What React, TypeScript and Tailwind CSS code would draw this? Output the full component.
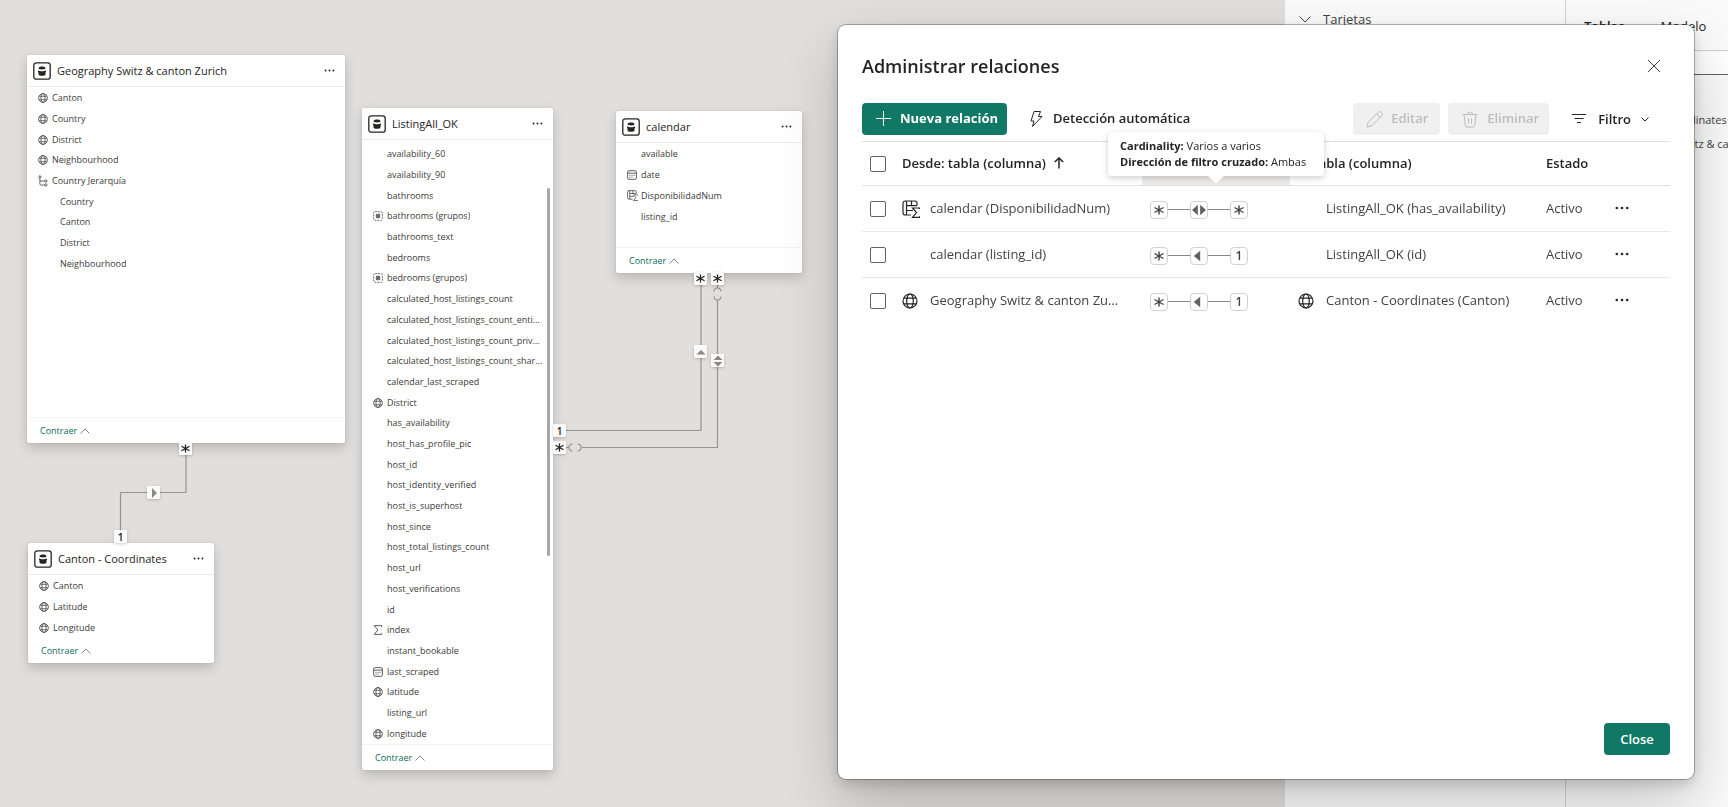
import React, { useState } from "react";

type IconName = "globe" | "hierarchy" | "group" | "date" | "calc" | "sigma";
type Field = { name: string; icon?: IconName; nested?: boolean };

const GlobeIcon = ({ className }: { className: string }) => (
  <svg viewBox="0 0 16 16" className={className} fill="none" stroke="currentColor" strokeWidth="1.2" aria-hidden="true">
    <circle cx="8" cy="8" r="7" />
    <ellipse cx="8" cy="8" rx="3.3" ry="7" />
    <path d="M2 5.2h12M2 10.8h12" />
  </svg>
);

const CalcIcon = ({ className }: { className: string }) => (
  <svg viewBox="0 0 18 18" className={className} fill="none" stroke="currentColor" strokeWidth="1.2" aria-hidden="true">
    <path d="M15 5.5V3.2A2.2 2.2 0 0 0 12.8 1H3.2A2.2 2.2 0 0 0 1 3.2v9.600A2.2 2.2 0 0 0 3.2 15H9M4.500 1v14M9.500 1v4.500M4.500 5.700H15M4.500 10.500H11" />
    <path d="M17.500 9V8H10.500L14.500 12.600 10.500 17.300h7v-1" />
  </svg>
);

const FieldIcon = ({ name }: { name: IconName }) => {
  if (name === "globe") return <GlobeIcon className="size-[10px]" />;
  if (name === "calc") return <CalcIcon className="size-[11px]" />;
  if (name === "sigma")
    return (
      <svg viewBox="0 0 16 16" className="size-[10px]" fill="none" stroke="currentColor" strokeWidth="1.3" aria-hidden="true">
        <path d="M14 3V1H1.800l6 7-6 7H14v-2" />
      </svg>
    );
  if (name === "date")
    return (
      <svg viewBox="0 0 16 16" className="size-[10px]" fill="none" stroke="currentColor" strokeWidth="1.3" aria-hidden="true">
        <rect x="1" y="1" width="14" height="14" rx="2.500" />
        <path d="M1 5h14" />
        <path d="M7.300 8.500h1.500M10.600 8.500h1.500M4 8.500h1.500M4 11.500h1.500M7.300 11.500h1.500" strokeWidth="1.500" />
      </svg>
    );
  if (name === "group")
    return (
      <svg viewBox="0 0 16 16" className="size-[10px]" fill="none" stroke="currentColor" strokeWidth="1.2" aria-hidden="true">
        <rect x="1" y="1" width="14" height="14" rx="2.500" strokeDasharray="3 1.600" />
        <rect x="4.500" y="4.500" width="7" height="7" rx="2" fill="currentColor" fillOpacity="0.75" stroke="none" />
      </svg>
    );
  return (
    <svg viewBox="0 0 16 18" className="h-3 w-[10px]" fill="none" stroke="currentColor" strokeWidth="1.2" aria-hidden="true">
      <circle cx="3" cy="2.500" r="1.800" />
      <path d="M3 4.300V13.500a2 2 0 0 0 2 2h5.500M3 9h7.500" />
      <circle cx="12.500" cy="9" r="1.900" />
      <circle cx="12.500" cy="15.300" r="1.900" />
    </svg>
  );
};

const TableIcon = () => (
  <svg viewBox="0 0 18 18" className="size-[18px] shrink-0" aria-hidden="true">
    <rect x="0.800" y="0.800" width="16.400" height="16.400" rx="2.500" fill="#fff" stroke="#252423" strokeWidth="1.300" />
    <path d="M5.500 6.200c0-2.400 7-2.400 7 0 0 1.600-7 1.600-7 0z" fill="#252423" />
    <path d="M5 8.200c2 1.400 6 1.400 8 0v1.500l-0.500 0.700v1.800c0 2-7 2-7 0v-1.800L5 9.700z" fill="#252423" />
  </svg>
);

const MoreIcon = ({ className }: { className: string }) => (
  <svg viewBox="0 0 14 4" className={className} fill="currentColor" aria-hidden="true">
    <circle cx="1.800" cy="2" r="1.300" />
    <circle cx="7" cy="2" r="1.300" />
    <circle cx="12.200" cy="2" r="1.300" />
  </svg>
);

const Asterisk = ({ className }: { className: string }) => (
  <svg viewBox="0 0 10 10" className={className} fill="none" stroke="currentColor" strokeWidth="1.400" aria-hidden="true">
    <path d="M5 0.500v9M0.500 2.500l9 5M9.500 2.500l-9 5" />
  </svg>
);

function TableCard({
  title,
  fields,
  card,
  list,
  footer = "h-[26px] border-t border-[#f3f2f1]",
  children,
}: {
  title: string;
  fields: Field[];
  card: string;
  list: string;
  footer?: string;
  children?: React.ReactNode;
}) {
  return (
    <section className={`absolute flex flex-col rounded-xs bg-white shadow-[0_5px_12px_rgba(0,0,0,0.18),0_0_2px_rgba(0,0,0,0.12)] ${card}`}>
      <header className="flex h-8 shrink-0 items-center border-b border-[#edebe9] px-[6px]">
        <TableIcon />
        <h2 className="ml-[6px] flex-1 truncate text-[11px] leading-4 text-[#252423]">{title}</h2>
        <button aria-label={`Más opciones de ${title}`} className="mr-1 flex h-4 items-center text-[#252423]">
          <MoreIcon className="h-[3px] w-[11px]" />
        </button>
      </header>
      <div className="relative flex min-h-0 flex-1 flex-col">
        <ul className={`grid auto-rows-fr ${list}`}>
          {fields.map((f, i) => (
            <li key={i} className={`flex min-w-0 items-center text-[#3b3a39] ${f.nested ? "pl-[33px]" : "pl-[11px]"}`}>
              {!f.nested && <span className="flex w-[14px] shrink-0 items-center">{f.icon && <FieldIcon name={f.icon} />}</span>}
              <span className="truncate text-[9px] leading-3">{f.name}</span>
            </li>
          ))}
        </ul>
        {children}
      </div>
      <footer className={`flex shrink-0 items-center pl-[13px] ${footer}`}>
        <button className="flex items-center gap-[3px] text-[9px] leading-3 text-[#0b6a5b]">
          Contraer
          <svg viewBox="0 0 10 6" className="h-[6px] w-[10px]" fill="none" stroke="#8a8886" aria-hidden="true">
            <path d="M0.500 5.500L5 1l4.500 4.500" />
          </svg>
        </button>
      </footer>
    </section>
  );
}

const geography: Field[] = [
  { name: "Canton", icon: "globe" },
  { name: "Country", icon: "globe" },
  { name: "District", icon: "globe" },
  { name: "Neighbourhood", icon: "globe" },
  { name: "Country Jerarquía", icon: "hierarchy" },
  { name: "Country", nested: true },
  { name: "Canton", nested: true },
  { name: "District", nested: true },
  { name: "Neighbourhood", nested: true },
];

const coordinates: Field[] = [
  { name: "Canton", icon: "globe" },
  { name: "Latitude", icon: "globe" },
  { name: "Longitude", icon: "globe" },
];

const calendar: Field[] = [
  { name: "available" },
  { name: "date", icon: "date" },
  { name: "DisponibilidadNum", icon: "calc" },
  { name: "listing_id" },
];

const listing: Field[] = [
  { name: "availability_60" },
  { name: "availability_90" },
  { name: "bathrooms" },
  { name: "bathrooms (grupos)", icon: "group" },
  { name: "bathrooms_text" },
  { name: "bedrooms" },
  { name: "bedrooms (grupos)", icon: "group" },
  { name: "calculated_host_listings_count" },
  { name: "calculated_host_listings_count_entire_homes" },
  { name: "calculated_host_listings_count_private_rooms" },
  { name: "calculated_host_listings_count_shared_rooms" },
  { name: "calendar_last_scraped" },
  { name: "District", icon: "globe" },
  { name: "has_availability" },
  { name: "host_has_profile_pic" },
  { name: "host_id" },
  { name: "host_identity_verified" },
  { name: "host_is_superhost" },
  { name: "host_since" },
  { name: "host_total_listings_count" },
  { name: "host_url" },
  { name: "host_verifications" },
  { name: "id" },
  { name: "index", icon: "sigma" },
  { name: "instant_bookable" },
  { name: "last_scraped", icon: "date" },
  { name: "latitude", icon: "globe" },
  { name: "listing_url" },
  { name: "longitude", icon: "globe" },
];

const Badge = ({ at, children }: { at: string; children: React.ReactNode }) => (
  <span
    className={`absolute flex size-[13px] items-center justify-center rounded-[1px] bg-[#fafafa] text-[10px] leading-3 font-semibold text-[#252423] shadow-[0_1px_3px_rgba(0,0,0,0.2)] ${at}`}
  >
    {children}
  </span>
);

const Arrow = ({ d, className }: { d: string; className: string }) => (
  <svg viewBox="0 0 12 12" className={className} fill="currentColor" aria-hidden="true">
    <path d={d} />
  </svg>
);

function Canvas() {
  return (
    <main className="relative min-w-0 flex-1 overflow-hidden bg-[#e1dfdd]">
      <svg className="absolute top-0 left-0 h-[807px] w-[840px]" fill="none" stroke="#979593" strokeWidth="1.200" aria-hidden="true">
        <path d="M186 455V492.500H120.500V531" />
        <path d="M701 284V430.500H566" />
        <path d="M717.500 284v4M717.500 300V447.500H582M566 447.500h3" />
        <path d="M714 291.500a3.500 3.500 0 0 1 7 0M714 296.500a3.500 3.500 0 0 0 7 0M572.500 444a3.500 3.500 0 0 0 0 7M577.500 444a3.500 3.500 0 0 1 0 7" />
      </svg>

      <TableCard title="Geography Switz & canton Zurich" fields={geography} card="top-[55px] left-[27px] h-[388px] w-[318px]" list="mt-[1px] h-[186px]" />
      <TableCard
        title="Canton - Coordinates"
        fields={coordinates}
        card="top-[543px] left-[28px] h-[120px] w-[186px]"
        list="h-[63px]"
        footer="h-[24px]"
      />
      <TableCard title="ListingAll_OK" fields={listing} card="top-[108px] left-[362px] h-[662px] w-[191px]" list="mt-1 flex-1 pr-[10px]">
        <span className="absolute top-[48px] right-[3px] h-[368px] w-[3px] rounded-full bg-[#a6a6a6]" />
      </TableCard>
      <TableCard title="calendar" fields={calendar} card="top-[111px] left-[616px] h-[162px] w-[186px]" list="h-[84px]" />

      <Badge at="top-[442px] left-[179px]"><Asterisk className="size-[9px]" /></Badge>
      <Badge at="top-[486px] left-[147px]"><Arrow d="M4 1l5 5-5 5z" className="size-3 text-[#8a8886]" /></Badge>
      <Badge at="top-[530px] left-[114px]">1</Badge>
      <Badge at="top-[272px] left-[694px]"><Asterisk className="size-[9px]" /></Badge>
      <Badge at="top-[272px] left-[711px]"><Asterisk className="size-[9px]" /></Badge>
      <Badge at="top-[345px] left-[694px]"><Arrow d="M1.500 8.500L6 4l4.500 4.500z" className="size-3 text-[#8a8886]" /></Badge>
      <Badge at="top-[354px] left-[711px]"><Arrow d="M1.500 5L6 0.500 10.500 5zM1.500 7L6 11.500 10.500 7z" className="size-3 text-[#8a8886]" /></Badge>
      <Badge at="top-[424px] left-[553px]">1</Badge>
      <Badge at="top-[441px] left-[553px]"><Asterisk className="size-[9px]" /></Badge>
    </main>
  );
}

function SidePanels() {
  return (
    <>
      <aside className="w-[280px] shrink-0 bg-[#fafafa] text-[13px] leading-5 text-[#424242]">
        <button className="flex items-center gap-3 pt-[9px] pl-[14px]">
          <svg viewBox="0 0 12 12" className="size-3" fill="none" stroke="currentColor" aria-hidden="true">
            <path d="M0.500 3.500L6 9l5.500-5.500" />
          </svg>
          Tarjetas
        </button>
      </aside>
      <aside className="w-[163px] shrink-0 overflow-hidden border-l border-[#d1d1d1] bg-[#fafafa] text-[#242424]">
        <div role="tablist" className="flex h-[51px] items-center gap-9 border-b border-[#d1d1d1] pt-[2px] pl-[18px] text-[13px] leading-5">
          <button role="tab" aria-selected="true" className="font-semibold">Tablas</button>
          <button role="tab" aria-selected="false">Modelo</button>
        </div>
        <input aria-label="Buscar" className="h-[23px] w-full border-b border-[#616161] bg-white px-2 outline-none" />
        <ul className="mt-[33px] text-[11px] leading-6 whitespace-nowrap text-[#424242]">
          <li className="pl-[52px]">Canton - Coordinates</li>
          <li className="pl-[52px]">Geography Switz &amp; canton Zurich</li>
        </ul>
      </aside>
    </>
  );
}

type Relation = {
  from: string;
  fromIcon?: "calc" | "globe";
  to: string;
  toIcon?: "globe";
  both: boolean;
  end: "*" | "1";
};

const relations: Relation[] = [
  { from: "calendar (DisponibilidadNum)", fromIcon: "calc", to: "ListingAll_OK (has_availability)", both: true, end: "*" },
  { from: "calendar (listing_id)", to: "ListingAll_OK (id)", both: false, end: "1" },
  { from: "Geography Switz & canton Zurich (Canton)", fromIcon: "globe", to: "Canton - Coordinates (Canton)", toIcon: "globe", both: false, end: "1" },
];

const CardinalBox = ({ children }: { children: React.ReactNode }) => (
  <span className="flex size-[18px] shrink-0 items-center justify-center rounded-[4px] border border-[#d1d1d1] bg-white text-[12px] leading-4 font-semibold text-[#424242]">
    {children}
  </span>
);

const CardinalLine = () => <span className="h-px w-[22px] shrink-0 bg-[#8a8886]" />;

const Check = ({ id, label }: { id: string; label: string }) => (
  <label htmlFor={id} className="flex items-center pl-2">
    <input id={id} type="checkbox" className="size-4 appearance-none rounded-[2px] border border-[#616161] bg-white checked:bg-[#117865]" />
    <span className="sr-only">{label}</span>
  </label>
);

function RelationsDialog({ onClose }: { onClose: () => void }) {
  return (
    <div className="fixed inset-0 flex justify-end pt-[25px] pr-[34px] pb-7">
      <div
        role="dialog"
        aria-labelledby="dialog-title"
        className="flex w-[856px] max-w-full flex-col rounded-lg bg-white px-6 pb-6 text-[13px] leading-5 text-[#242424] shadow-[0_0_0_1px_rgba(0,0,0,0.28),0_5px_14px_rgba(0,0,0,0.16),0_26px_58px_rgba(0,0,0,0.2)]"
      >
        <div className="flex items-center justify-between pt-[27px] pr-[10px]">
          <h1 id="dialog-title" className="text-[18px] leading-7 font-semibold">Administrar relaciones</h1>
          <button aria-label="Cerrar" onClick={onClose} className="flex size-3 items-center text-[#424242]">
            <svg viewBox="0 0 12 12" className="size-3" fill="none" stroke="currentColor" aria-hidden="true">
              <path d="M0 0l12 12M12 0L0 12" />
            </svg>
          </button>
        </div>

        <div className="mt-[23px] flex h-8 items-stretch">
          <button className="flex w-[145px] items-center gap-[8px] rounded-[4px] bg-[#117865] pl-[14px] font-bold whitespace-nowrap text-white">
            <svg viewBox="0 0 16 16" className="size-4 shrink-0" fill="none" stroke="currentColor" aria-hidden="true">
              <path d="M7.500 0v15M0 7.500h15" />
            </svg>
            <span className="pb-[2px]">Nueva relación</span>
          </button>
          <button className="ml-[22px] flex items-center gap-[10px] font-semibold">
            <svg viewBox="0 0 14 16" className="h-4 w-[14px]" fill="none" stroke="currentColor" strokeLinejoin="round" aria-hidden="true">
              <path d="M5 0.500h6.500L9.500 5.500H13L3.500 15.500 5 10H2z" />
            </svg>
            <span className="pb-[2px]">Detección automática</span>
          </button>
          <div className="ml-auto flex gap-2 text-[#bdbdbd]">
            <button disabled className="flex w-[87px] items-center gap-2 rounded-[4px] bg-[#f0f0f0] pl-[13px] font-semibold">
              <svg viewBox="0 0 17 17" className="size-[17px]" fill="none" stroke="currentColor" strokeLinejoin="round" aria-hidden="true">
                <path d="M1 16l1.200-4.700L12.200 1.300a2 2 0 0 1 3 0l0.500 0.500a2 2 0 0 1 0 3L5.700 14.800zM10.500 3l3.500 3.500" />
              </svg>
              <span className="pb-[2px]">Editar</span>
            </button>
            <button disabled className="flex w-[101px] items-center gap-[9px] rounded-[4px] bg-[#f0f0f0] pl-[14px] font-semibold">
              <svg viewBox="0 0 16 17" className="h-[17px] w-4" fill="none" stroke="currentColor" strokeLinejoin="round" aria-hidden="true">
                <path d="M0.500 3.500h15M5.500 3.500a2.500 2.500 0 0 1 5 0M2 3.500l1.200 11a1.800 1.800 0 0 0 1.800 1.600h6a1.800 1.800 0 0 0 1.800-1.600l1.200-11M6.500 7v5.500M9.500 7v5.500" />
              </svg>
              <span className="pb-[2px]">Eliminar</span>
            </button>
          </div>
          <button className="mr-[21px] ml-[23px] flex items-center font-semibold">
            <svg viewBox="0 0 14 12" className="h-3 w-[14px]" fill="none" stroke="currentColor" aria-hidden="true">
              <path d="M0 1.500h14M2.500 5.500h9M5 9.500h4" />
            </svg>
            <span className="ml-3">Filtro</span>
            <svg viewBox="0 0 8 8" className="ml-[10px] size-2" fill="none" stroke="currentColor" aria-hidden="true">
              <path d="M0.500 2.500L4 6l3.500-3.500" />
            </svg>
          </button>
        </div>

        <table className="mt-[6px] w-full table-fixed border-collapse text-left">
          <colgroup>
            <col className="w-8" />
            <col />
            <col className="w-[148px]" />
            <col />
            <col className="w-[70px]" />
            <col className="w-[62px]" />
          </colgroup>
          <thead>
            <tr className="h-[44px] border-y border-[#e0e0e0]">
              <th className="p-0"><Check id="all" label="Seleccionar todo" /></th>
              <th className="p-0 pb-[2px] pl-2 font-semibold">
                <span className="flex items-center gap-2">
                  Desde: tabla (columna)
                  <svg viewBox="0 0 10 12" className="h-3 w-[10px]" fill="none" stroke="currentColor" strokeWidth="1.500" aria-hidden="true">
                    <path d="M5 11.500V1M0.800 5L5 1l4.200 4" />
                  </svg>
                </span>
              </th>
              <th className="relative bg-[#edebe9] p-0">
                <span className="sr-only">Relación</span>
                <div role="tooltip" className="absolute bottom-[9px] -left-[34px] w-[216px] rounded-[4px] bg-white px-3 py-[6px] text-[11px] leading-4 font-normal whitespace-nowrap shadow-[0_2px_6px_rgba(0,0,0,0.2)]">
                  <p><b className="font-bold">Cardinality:</b> Varios a varios</p>
                  <p><b className="font-bold">Dirección de filtro cruzado:</b> Ambas</p>
                  <svg viewBox="0 0 16 7" className="absolute top-full left-[100px] h-[7px] w-4" fill="#fff" aria-hidden="true">
                    <path d="M0 0h16L9 6.500a1.500 1.500 0 0 1-2 0z" />
                  </svg>
                </div>
              </th>
              <th className="p-0 pb-[2px] pl-2 font-semibold">A: tabla (columna)</th>
              <th className="p-0 pb-[2px] pl-2 font-semibold">Estado</th>
              <th className="p-0"><span className="sr-only">Acciones</span></th>
            </tr>
          </thead>
          <tbody className="text-[#424242]">
            {relations.map((r, i) => (
              <tr key={r.from} className="h-[46px] border-b border-[#e8e8e8] last:border-b-0">
                <td className="p-0"><Check id={`rel-${i}`} label={`Seleccionar ${r.from}`} /></td>
                <td className="p-0 pr-3 pl-2">
                  <span className="flex items-center">
                    <span className="w-7 shrink-0 text-[#242424]">
                      {r.fromIcon === "calc" && <CalcIcon className="size-[18px]" />}
                      {r.fromIcon === "globe" && <GlobeIcon className="size-4" />}
                    </span>
                    <span className="w-[192px] truncate pb-[2px]">{r.from}</span>
                  </span>
                </td>
                <td className="p-0 pl-2">
                  <span className="flex items-center pt-[2px]">
                    <CardinalBox><Asterisk className="size-[10px]" /></CardinalBox>
                    <CardinalLine />
                    <CardinalBox>
                      <Arrow d={r.both ? "M5 1.500v9L0 6zM7 1.500v9L12 6z" : "M7 1.500v9L1.500 6z"} className="size-[14px] shrink-0 text-[#616161]" />
                    </CardinalBox>
                    <CardinalLine />
                    <CardinalBox>{r.end === "*" ? <Asterisk className="size-[10px]" /> : "1"}</CardinalBox>
                  </span>
                </td>
                <td className="p-0 pl-2">
                  <span className="flex items-center">
                    <span className="w-7 shrink-0 text-[#242424]">{r.toIcon && <GlobeIcon className="size-4" />}</span>
                    <span className="truncate pb-[2px]">{r.to}</span>
                  </span>
                </td>
                <td className="p-0 pb-[2px] pl-2">Activo</td>
                <td className="p-0 pb-[2px] pl-[7px]">
                  <button aria-label={`Más opciones de ${r.from}`} className="flex items-center text-[#242424]">
                    <MoreIcon className="h-1 w-[14px]" />
                  </button>
                </td>
              </tr>
            ))}
          </tbody>
        </table>

        <div className="mt-auto flex justify-end">
          <button onClick={onClose} className="h-8 w-[66px] rounded-[4px] bg-[#117865] font-semibold text-white">Close</button>
        </div>
      </div>
    </div>
  );
}

export default function App() {
  const [open, setOpen] = useState(true);
  return (
    <div className="flex h-screen overflow-hidden bg-[#e1dfdd] font-['Open_Sans','Noto_Sans',sans-serif]">
      <Canvas />
      <SidePanels />
      {open && <RelationsDialog onClose={() => setOpen(false)} />}
    </div>
  );
}
